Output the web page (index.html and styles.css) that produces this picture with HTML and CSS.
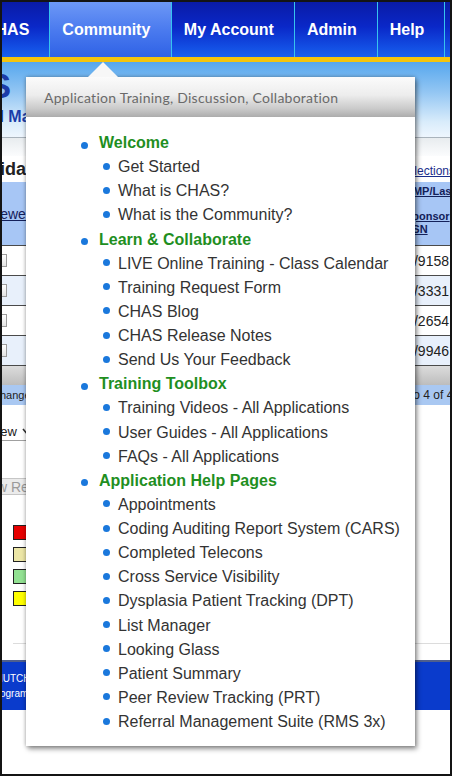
FILE: index.html
```html
<!DOCTYPE html>
<html lang="en">
<head>
<meta charset="utf-8">
<title>CHAS Community</title>
<link rel="stylesheet" href="styles.css">
</head>
<body>
<div class="frame">
  <div class="navbar">
    <nav class="nav">
      <div class="nav-item">CHAS</div>
      <div class="nav-item active">Community</div>
      <div class="nav-item">My Account</div>
      <div class="nav-item">Admin</div>
      <div class="nav-item">Help</div>
      <div class="nav-item">Logout</div>
    </nav>
  </div>

  <header class="banner">
    <div class="banner-title">CHAS</div>
    <div class="banner-sub">Clinical Management</div>
  </header>
  <div class="subbar"></div>

  <main class="content">
    <div class="title-row">
      <h1 class="page-title">Candidates</h1>
      <a class="sel-link">Clear Selections</a>
    </div>

    <div class="grid-head">
      <a class="gh-left">Viewed</a>
      <div class="gh-right">
        <div class="gh-top"><a>CMP/Last Name</a></div>
        <div class="gh-bottom"><a>Sponsor</a><a>SSN</a></div>
      </div>
    </div>
    <div class="row"><span class="cb"></span><span class="row-val">0/9158</span></div>
    <div class="row alt"><span class="cb"></span><span class="row-val">0/3331</span></div>
    <div class="row"><span class="cb"></span><span class="row-val">0/2654</span></div>
    <div class="row alt"><span class="cb"></span><span class="row-val">0/9946</span></div>
    <div class="pager"></div>
    <div class="actions">
      <span class="act-left">Change Status</span>
      <span class="act-right">1 to 4 of 4</span>
    </div>

    <div class="select">View
      <svg class="chev" width="8" height="6" viewBox="0 0 8 6"><path d="M1 1 L4 4.5 L7 1" fill="none" stroke="#333" stroke-width="1.6"/></svg>
    </div>
    <div class="btn">View Report</div>

    <div class="legend">
      <span class="sq red"></span>
      <span class="sq beige"></span>
      <span class="sq green"></span>
      <span class="sq yellow"></span>
    </div>
  </main>

  <footer class="footer">
    <span class="f1">HUTCHINSON</span>
    <span class="f2">Program</span>
  </footer>

  <div class="menu">
    <div class="menu-head">Application Training, Discussion, Collaboration</div>
    <ul class="menu-list">
      <li><div class="group-title">Welcome</div>
        <ul class="sub">
          <li>Get Started</li>
          <li>What is CHAS?</li>
          <li>What is the Community?</li>
        </ul>
      </li>
      <li><div class="group-title">Learn &amp; Collaborate</div>
        <ul class="sub">
          <li>LIVE Online Training - Class Calendar</li>
          <li>Training Request Form</li>
          <li>CHAS Blog</li>
          <li>CHAS Release Notes</li>
          <li>Send Us Your Feedback</li>
        </ul>
      </li>
      <li><div class="group-title">Training Toolbox</div>
        <ul class="sub">
          <li>Training Videos - All Applications</li>
          <li>User Guides - All Applications</li>
          <li>FAQs - All Applications</li>
        </ul>
      </li>
      <li><div class="group-title">Application Help Pages</div>
        <ul class="sub">
          <li>Appointments</li>
          <li>Coding Auditing Report System (CARS)</li>
          <li>Completed Telecons</li>
          <li>Cross Service Visibility</li>
          <li>Dysplasia Patient Tracking (DPT)</li>
          <li>List Manager</li>
          <li>Looking Glass</li>
          <li>Patient Summary</li>
          <li>Peer Review Tracking (PRT)</li>
          <li>Referral Management Suite (RMS 3x)</li>
        </ul>
      </li>
    </ul>
  </div>
</div>
</body>
</html>
```

FILE: styles.css
```css
* { box-sizing: border-box; }
html, body { margin: 0; padding: 0; }
body {
  width: 452px;
  height: 776px;
  overflow: hidden;
  background: #fff;
  font-family: "Liberation Sans", Arial, sans-serif;
}
.frame {
  position: relative;
  width: 452px;
  height: 776px;
  border: 2px solid #141414;
  overflow: hidden;
  background: #fff;
}

/* nav */
.navbar {
  height: 60px;
  background: linear-gradient(#0a1ba6 0%, #0a28c8 45%, #1760f0 100%);
  border-bottom: 5px solid #f3c40e;
  overflow: hidden;
}
.nav {
  display: flex;
  height: 55px;
  margin-left: -30px;
}
.nav-item {
  display: flex;
  align-items: center;
  padding: 0 20px 0 12px;
  color: #fff;
  font-weight: bold;
  font-size: 16px;
  white-space: nowrap;
  border-left: 1px solid #36c4ee;
}
.nav-item:first-child { border-left: 0; }
.nav-item.active {
  background: linear-gradient(#6d98f6 0%, #4b7bef 50%, #2f62e6 100%);
  padding-right: 20.5px;
}

/* banner */
.banner {
  height: 75px;
  padding-top: 6px;
  background: linear-gradient(#56a7ee 0%, #93c6f3 40%, #d9ecfb 80%, #eef6fe 100%);
  color: #1b3ca8;
  white-space: nowrap;
  overflow: hidden;
}
.banner-title {
  font-size: 35px;
  font-weight: bold;
  line-height: 35px;
  margin-left: -90px;
}
.banner-sub {
  font-size: 16px;
  font-weight: bold;
  line-height: 16px;
  margin-top: 6px;
  margin-left: -55px;
}
.subbar {
  height: 19px;
  border-top: 1px solid #a9b3bc;
  background: linear-gradient(#e8ecef, #fbfcfd);
}

/* content */
.content { white-space: nowrap; }
.title-row {
  display: flex;
  justify-content: space-between;
  align-items: center;
  height: 26px;
  overflow: hidden;
}
.page-title {
  margin: 0 0 0 -47px;
  font-size: 18px;
  font-weight: bold;
  color: #222;
}
.sel-link {
  font-size: 12px;
  color: #1a2e8c;
  text-decoration: underline;
  margin-right: -5px;
  margin-top: 3px;
}
.grid-head {
  display: flex;
  justify-content: space-between;
  align-items: stretch;
  height: 63px;
  background: #a7c6f5;
  overflow: hidden;
}
.gh-left {
  align-self: center;
  margin-left: -14px;
  font-size: 14px;
  color: #14205a;
  text-decoration: underline;
}
.gh-right {
  width: 45px;
  display: flex;
  flex-direction: column;
  font-size: 11px;
  font-weight: bold;
  color: #13215a;
  overflow: hidden;
}
.gh-right a { text-decoration: underline; display: block; }
.gh-top {
  height: 18px;
  display: flex;
  align-items: center;
}
.gh-bottom {
  flex: 1;
  display: flex;
  flex-direction: column;
  justify-content: center;
  line-height: 13px;
}
.row {
  display: flex;
  justify-content: space-between;
  align-items: center;
  height: 30px;
  border-top: 1px solid #4a4a4a;
  background: #fff;
}
.row.alt { background: #e8f0fb; }
.cb {
  width: 13px;
  height: 13px;
  margin-left: -8px;
  border: 1px solid #9c9c9c;
  background: linear-gradient(#ffffff, #e4e4e4);
}
.row-val {
  width: 48px;
  text-align: right;
  padding-right: 1px;
  font-size: 14px;
  color: #222;
}
.pager {
  height: 20px;
  border-top: 1px solid #4a4a4a;
  background: linear-gradient(#dcdcdc, #bdbdbd);
}
.actions {
  display: flex;
  justify-content: space-between;
  align-items: center;
  height: 20px;
  background: #a9c8f2;
  color: #222;
  overflow: hidden;
}
.act-left { font-size: 11px; margin-left: -10px; }
.act-right { font-size: 12px; width: 50px; overflow: hidden; }

.select {
  display: flex;
  align-items: center;
  gap: 5px;
  width: 60px;
  height: 19px;
  margin: 17px 0 0 -13px;
  padding-left: 0;
  border-bottom: 1px solid #a0a0a0;
  font-size: 13px;
  color: #222;
}
.btn {
  display: flex;
  align-items: center;
  width: 90px;
  height: 17px;
  margin: 37px 0 0 -28px;
  padding-left: 2px;
  background: #ebebeb;
  border: 1px solid #c6c6c6;
  font-size: 14px;
  color: #9a9a9a;
}
.legend {
  display: flex;
  flex-direction: column;
  gap: 7px;
  margin: 30px 0 0 11px;
  padding-bottom: 37px;
  border-bottom: 1px solid #dcdcdc;
}
.sq {
  width: 15px;
  height: 15px;
  border: 1px solid #222;
}
.sq.red { background: #e60000; }
.sq.beige { background: #ece6a6; }
.sq.green { background: #92e192; }
.sq.yellow { background: #ffff00; }

.footer {
  display: flex;
  flex-direction: column;
  justify-content: center;
  height: 50px;
  margin-top: 16px;
  border-top: 2px solid #4f5f8e;
  background: #0a3bcc;
  color: #fff;
  font-size: 10px;
  line-height: 15px;
  white-space: nowrap;
}
.f1 { margin-left: -6.5px; }
.f2 { margin-left: -12px; }

/* dropdown menu */
.menu {
  position: absolute;
  left: 24px;
  top: 75px;
  width: 389px;
  height: 669px;
  background: #fff;
  box-shadow: 2px 3px 5px rgba(0,0,0,0.4), 0 0 4px rgba(0,0,0,0.3);
}
.menu::before {
  content: "";
  position: absolute;
  left: 62px;
  top: -15px;
  width: 0;
  height: 0;
  border-left: 15px solid transparent;
  border-right: 15px solid transparent;
  border-bottom: 15px solid #f7f7f7;
}
.menu-head {
  height: 40px;
  display: flex;
  align-items: center;
  padding-left: 18px;
  background: linear-gradient(#fbfbfb 0%, #ededed 45%, #c9c9c9 80%, #acacac 100%);
  color: #6a6a6a;
  font-family: Lato, "Liberation Sans", sans-serif;
  font-size: 14px;
  letter-spacing: 0.25px;
  white-space: nowrap;
}
.menu-list {
  list-style: none;
  margin: 0;
  padding: 14px 0 12px;
  font-size: 16px;
  line-height: 24.125px;
}
.group-title {
  display: flex;
  align-items: center;
  padding-left: 54.5px;
  font-weight: bold;
  color: #1f8f1f;
}
.group-title::before,
.sub li::before {
  content: "";
  flex: none;
  width: 7px;
  height: 7px;
  border-radius: 50%;
  background: #1a78dc;
}
.group-title::before {
  margin-right: 11.5px;
  transform: translateY(2px);
}
.sub {
  list-style: none;
  margin: 0;
  padding: 0;
}
.sub li {
  display: flex;
  align-items: center;
  padding-left: 76.5px;
  color: #333;
}
.sub li::before {
  margin-right: 8.5px;
  transform: translateY(-1px);
}
```
